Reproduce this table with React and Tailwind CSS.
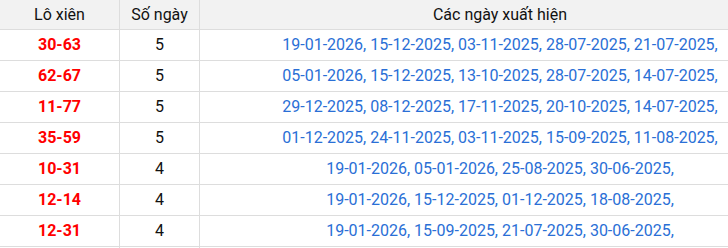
const rows = [
  { pair: '30-63', count: 5, dates: ['19-01-2026', '15-12-2025', '03-11-2025', '28-07-2025', '21-07-2025'] },
  { pair: '62-67', count: 5, dates: ['05-01-2026', '15-12-2025', '13-10-2025', '28-07-2025', '14-07-2025'] },
  { pair: '11-77', count: 5, dates: ['29-12-2025', '08-12-2025', '17-11-2025', '20-10-2025', '14-07-2025'] },
  { pair: '35-59', count: 5, dates: ['01-12-2025', '24-11-2025', '03-11-2025', '15-09-2025', '11-08-2025'] },
  { pair: '10-31', count: 4, dates: ['19-01-2026', '05-01-2026', '25-08-2025', '30-06-2025'] },
  { pair: '12-14', count: 4, dates: ['19-01-2026', '15-12-2025', '01-12-2025', '18-08-2025'] },
  { pair: '12-31', count: 4, dates: ['19-01-2026', '15-09-2025', '21-07-2025', '30-06-2025'] },
];

const App = () => {
  return (
    <div className="w-[728px] h-[248px] overflow-hidden bg-white" style={{ fontFamily: 'Roboto, "Liberation Sans", sans-serif' }}>
      <div className="w-[800px] text-[16px]">
        <div className="flex h-[30px] border-b border-[#dddddd] bg-[#f2f2f2] text-[#111111]">
          <div className="w-[120px] border-r border-[#dddddd] flex items-center justify-center">Lô xiên</div>
          <div className="w-[80px] border-r border-[#dddddd] flex items-center justify-center">Số ngày</div>
          <div className="flex-1 flex items-center justify-center">Các ngày xuất hiện</div>
        </div>
        {rows.map((row) => (
          <div key={row.pair} className="flex h-[31px] border-b border-[#dddddd]">
            <div className="w-[120px] border-r border-[#dddddd] flex items-center justify-center font-bold text-[#ff0000]">
              {row.pair}
            </div>
            <div className="w-[80px] border-r border-[#dddddd] flex items-center justify-center text-[#111111]">
              {row.count}
            </div>
            <div className="flex-1 flex items-center justify-center text-[#2a6fd6] whitespace-nowrap">
              {row.dates.map((d) => d + ',').join(' ')}
            </div>
          </div>
        ))}
        {/* next row, only its top edge is in view */}
        <div className="flex h-[31px] border-b border-[#dddddd]">
          <div className="w-[120px] border-r border-[#dddddd]" />
          <div className="w-[80px] border-r border-[#dddddd]" />
          <div className="flex-1" />
        </div>
      </div>
    </div>
  );
};

export default App;
